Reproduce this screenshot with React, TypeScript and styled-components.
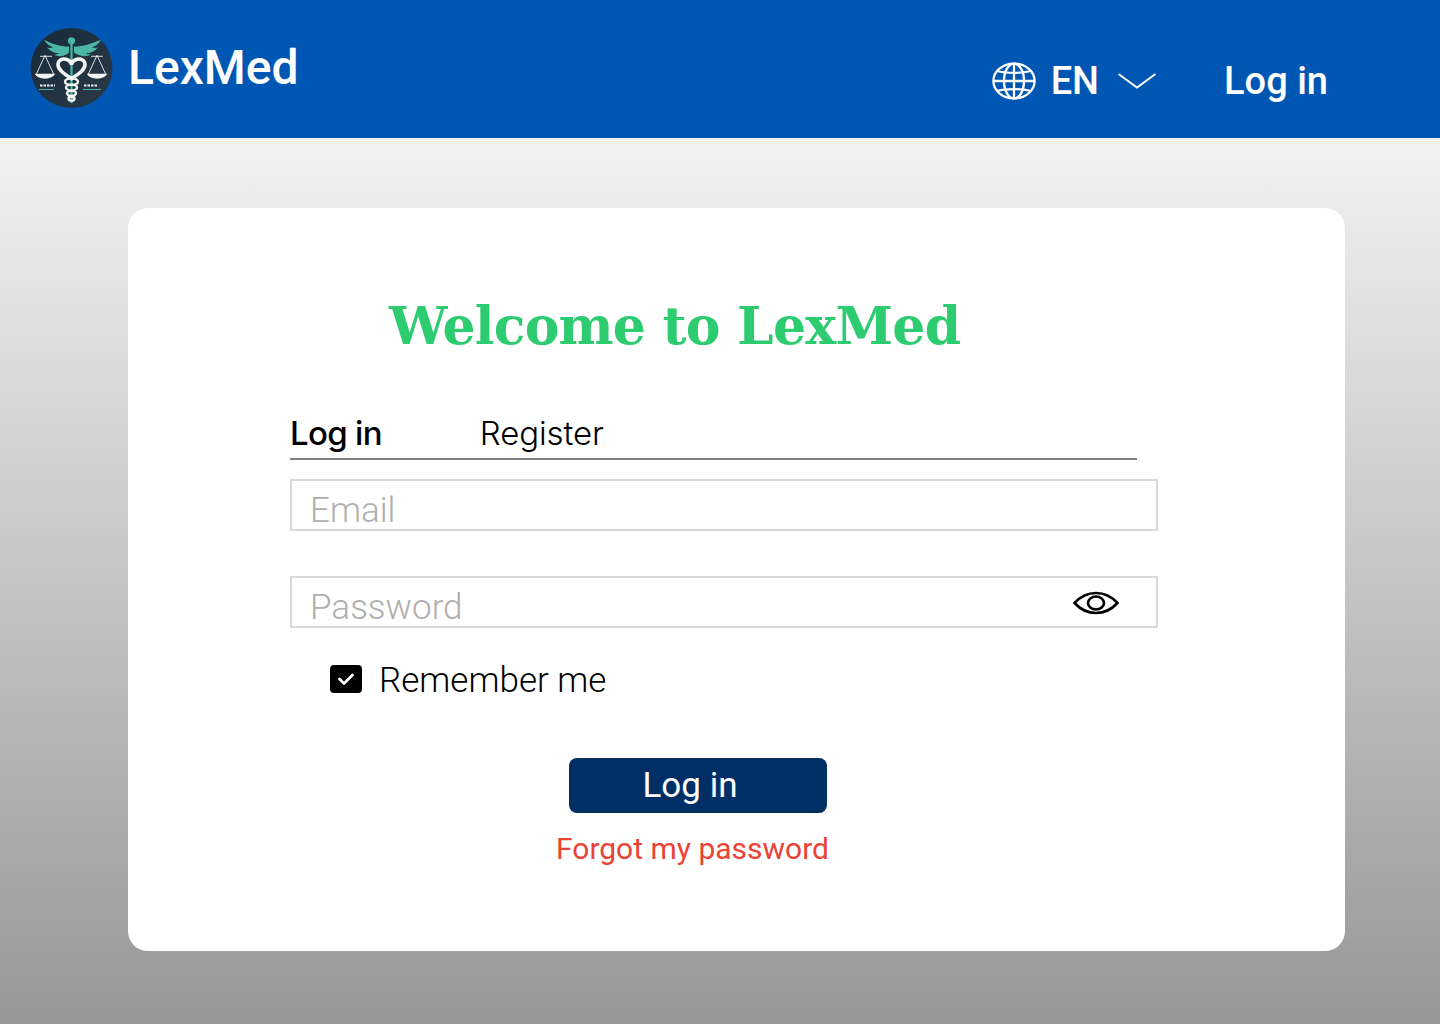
import { useState } from 'react';
import styled, { createGlobalStyle } from 'styled-components';

const GlobalStyle = createGlobalStyle`
  html, body {
    margin: 0;
    padding: 0;
  }
  * {
    box-sizing: border-box;
  }
`;

function Logo() {
  return (
    <LogoSvg viewBox="0 0 83 82" preserveAspectRatio="none" aria-hidden="true">
      <defs>
        <linearGradient id="logoBg" x1="0" y1="0" x2="1" y2="1">
          <stop offset="0" stopColor="#17293a" />
          <stop offset="1" stopColor="#2b3a46" />
        </linearGradient>
      </defs>
      <circle cx="41.5" cy="41" r="41" fill="url(#logoBg)" />
      <g fill="#4cb8a4">
        <circle cx="41.5" cy="13" r="3.6" />
        <path d="M39 19 C30 19 22 16 14 12 C16 16 19 18 23 20 C21 20.5 19 20.5 17 20 C20 24 25 26 29 26 C28 27 26 27.5 24 27.5 C29 30 35 29 39 25 Z" />
        <path d="M44 19 C53 19 61 16 71 12 C69 16 66 18 62 20 C64 20.5 66 20.5 68 20 C65 24 60 26 56 26 C57 27 59 27.5 61 27.5 C56 30 50 29 44 25 Z" />
        <rect x="40.4" y="15" width="2.2" height="62" />
      </g>
      <g fill="none" stroke="#f2f4f4" strokeWidth="0.9">
        <path d="M10 29 H22 M15 28 L6 48 M15 28 L24 48" />
        <path d="M61 29 H73 M67 28 L58 48 M67 28 L76 48" />
      </g>
      <path d="M5 47 H25 C24 50 20 52 15 52 C10 52 6 50 5 47 Z" fill="#f2f4f4" />
      <path d="M57 47 H77 C76 50 72 52 67 52 C62 52 58 50 57 47 Z" fill="#f2f4f4" />
      <path
        d="M41.5 52 C34 47 28 43 28 37.5 C28 33 32 31 36 32 C39 33 41.5 35.5 41.5 38 C41.5 35.5 44 33 47 32 C51 31 55 33 55 37.5 C55 43 49 47 41.5 52 Z"
        fill="none"
        stroke="#f4f6f6"
        strokeWidth="3.6"
      />
      <g fill="none" stroke="#f4f6f6" strokeWidth="2.4">
        <ellipse cx="41.5" cy="55" rx="6.5" ry="3.4" />
        <ellipse cx="41.5" cy="61" rx="5.5" ry="3" />
        <ellipse cx="41.5" cy="67" rx="4.5" ry="2.6" />
        <ellipse cx="41.5" cy="72.5" rx="3" ry="2" />
      </g>
      <g stroke="#4cb8a4" strokeWidth="1">
        <path d="M9 63 H24" />
        <path d="M53 63 H71" />
      </g>
      <g stroke="#e8ecec" strokeWidth="2" strokeDasharray="2.5 1">
        <path d="M10 59 H25" />
        <path d="M54 59 H68" />
      </g>
    </LogoSvg>
  );
}

function GlobeIcon() {
  return (
    <svg width="44" height="38" viewBox="0 0 44 38" fill="none" stroke="#fff" strokeWidth="2.3" aria-hidden="true">
      <ellipse cx="22" cy="19" rx="20.6" ry="17.4" />
      <ellipse cx="22" cy="19" rx="10" ry="17.4" />
      <path d="M22 1.6 V36.4 M1.4 19 H42.6" />
      <path d="M5 9 C14 11.5 30 11.5 39 9 M5 29 C14 26.5 30 26.5 39 29" />
    </svg>
  );
}

function ChevronIcon() {
  return (
    <svg width="38" height="16" viewBox="0 0 38 16" fill="none" stroke="#fff" strokeWidth="2" aria-hidden="true">
      <path d="M0.5 1 L19 14.5 L37.5 1" />
    </svg>
  );
}

function EyeIcon() {
  return (
    <svg width="46" height="24" viewBox="0 0 46 24" fill="none" stroke="#000" strokeWidth="2.6" aria-hidden="true">
      <path d="M1.5 12 C8 5 15 2 23 2 C31 2 38 5 44.5 12 C38 19 31 22 23 22 C15 22 8 19 1.5 12 Z" />
      <ellipse cx="23" cy="12" rx="8" ry="6.5" />
    </svg>
  );
}

export default function App() {
  const [remember, setRemember] = useState(true);

  return (
    <Page>
      <GlobalStyle />
      <Header>
        <Brand>
          <Logo />
          <BrandName>LexMed</BrandName>
        </Brand>
        <HeaderActions>
          <LangSwitch>
            <GlobeIcon />
            <LangCode>EN</LangCode>
            <ChevronIcon />
          </LangSwitch>
          <HeaderLink>Log in</HeaderLink>
        </HeaderActions>
      </Header>
      <Main>
        <Card>
          <Title>Welcome to LexMed</Title>
          <Tabs>
            <Tab active>Log in</Tab>
            <Tab>Register</Tab>
          </Tabs>
          <Field>
            <Input placeholder="Email" />
          </Field>
          <Field>
            <Input placeholder="Password" type="password" />
            <EyeButton type="button" aria-label="Show password">
              <EyeIcon />
            </EyeButton>
          </Field>
          <RememberRow>
            <CheckBox type="button" onClick={() => setRemember(!remember)} aria-label="Remember me">
              {remember && (
                <svg width="18" height="14" viewBox="0 0 18 14" fill="none" stroke="#fff" strokeWidth="2.8" strokeLinecap="round" strokeLinejoin="round">
                  <path d="M2.5 7 L7 11.5 L15.5 3" />
                </svg>
              )}
            </CheckBox>
            <RememberText>Remember me</RememberText>
          </RememberRow>
          <Actions>
            <SubmitButton type="button">Log in</SubmitButton>
            <ForgotLink href="#">Forgot my password</ForgotLink>
          </Actions>
        </Card>
      </Main>
    </Page>
  );
}

const Page = styled.div`
  width: 1440px;
  height: 1024px;
  overflow: hidden;
  font-family: Roboto, 'Liberation Sans', sans-serif;
  background: #fff;
`;
const Header = styled.header`
  height: 138px;
  background-color: #0057b3;
  display: flex;
  justify-content: space-between;
  padding: 27px 112px 0 30px;
`;
const Brand = styled.div`
  display: flex;
  align-items: flex-start;
  gap: 15px;
`;
const LogoSvg = styled.svg`
  width: 83px;
  height: 80px;
  margin-top: 1px;
`;
const BrandName = styled.span`
  font-size: 48px;
  font-weight: 500;
  line-height: 54px;
  margin-top: 14px;
  color: #fff;
`;
const HeaderActions = styled.div`
  display: flex;
  align-items: center;
  gap: 68px;
  height: 108px;
`;
const LangSwitch = styled.div`
  display: flex;
  align-items: center;
`;
const LangCode = styled.span`
  font-size: 38px;
  font-weight: 500;
  color: #fff;
  margin: 0 19px 0 15px;
`;
const HeaderLink = styled.a`
  font-size: 38px;
  font-weight: 500;
  color: #fff;
`;
const Main = styled.main`
  height: 886px;
  padding: 70px 95px 73px 128px;
  background: linear-gradient(180deg, #f2f2f2 0%, #979797 100%);
`;
const Card = styled.section`
  height: 743px;
  background-color: #fff;
  border-radius: 20px;
  padding: 82px 187px 0 162px;
`;
const Title = styled.h1`
  margin: 0 0 0 99px;
  font-family: 'DejaVu Serif', 'Liberation Serif', serif;
  font-size: 52px;
  font-weight: 700;
  line-height: 72px;
  letter-spacing: -0.75px;
  color: #2ecc71;
  white-space: nowrap;
`;
const Tabs = styled.div`
  width: 847px;
  margin-top: 46px;
  height: 52px;
  display: flex;
  gap: 98px;
  border-bottom: 2px solid #808080;
`;
const Tab = styled.div<{ active?: boolean }>`
  font-family: Inter, Lato, sans-serif;
  font-size: 33px;
  font-weight: ${({ active }) => (active ? 500 : 300)};
  letter-spacing: ${({ active }) => (active ? '-0.7px' : '-0.1px')};
  line-height: 50px;
  color: #000;
`;
const Field = styled.div`
  position: relative;
  width: 868px;
  height: 52px;
  margin-top: 19px;
  border: 2px solid #d8d8d8;
  & + & {
    margin-top: 45px;
  }
`;
const Input = styled.input`
  width: 100%;
  height: 100%;
  border: 0;
  outline: 0;
  padding: 11px 0 0 18px;
  font-family: Roboto, sans-serif;
  font-size: 35px;
  font-weight: 300;
  background: transparent;
  &::placeholder {
    color: #b0aeae;
    opacity: 1;
  }
`;
const EyeButton = styled.button`
  position: absolute;
  top: 13px;
  right: 37px;
  padding: 0;
  border: 0;
  background: none;
  display: flex;
`;
const RememberRow = styled.div`
  display: flex;
  align-items: flex-start;
  gap: 17px;
  margin: 27px 0 0 40px;
`;
const CheckBox = styled.button`
  width: 32px;
  height: 28px;
  margin-top: 10px;
  padding: 0;
  border: 0;
  border-radius: 4px;
  background-color: #000;
  display: flex;
  align-items: center;
  justify-content: center;
`;
const RememberText = styled.span`
  margin-top: 1px;
  font-size: 35px;
  font-weight: 300;
  line-height: 50px;
  color: #000;
`;
const Actions = styled.div`
  width: 868px;
  margin-top: 52px;
  display: flex;
  flex-direction: column;
  align-items: flex-start;
`;
const SubmitButton = styled.button`
  width: 258px;
  height: 55px;
  margin-left: 279px;
  padding: 0 16px 0 0;
  border: 0;
  border-radius: 8px;
  background-color: #002f66;
  color: #fff;
  font-family: Roboto, sans-serif;
  font-size: 35px;
  font-weight: 400;
`;
const ForgotLink = styled.a`
  margin: 15px 0 0 266px;
  font-size: 30px;
  line-height: 42px;
  color: #ea4335;
  text-decoration: none;
`;
